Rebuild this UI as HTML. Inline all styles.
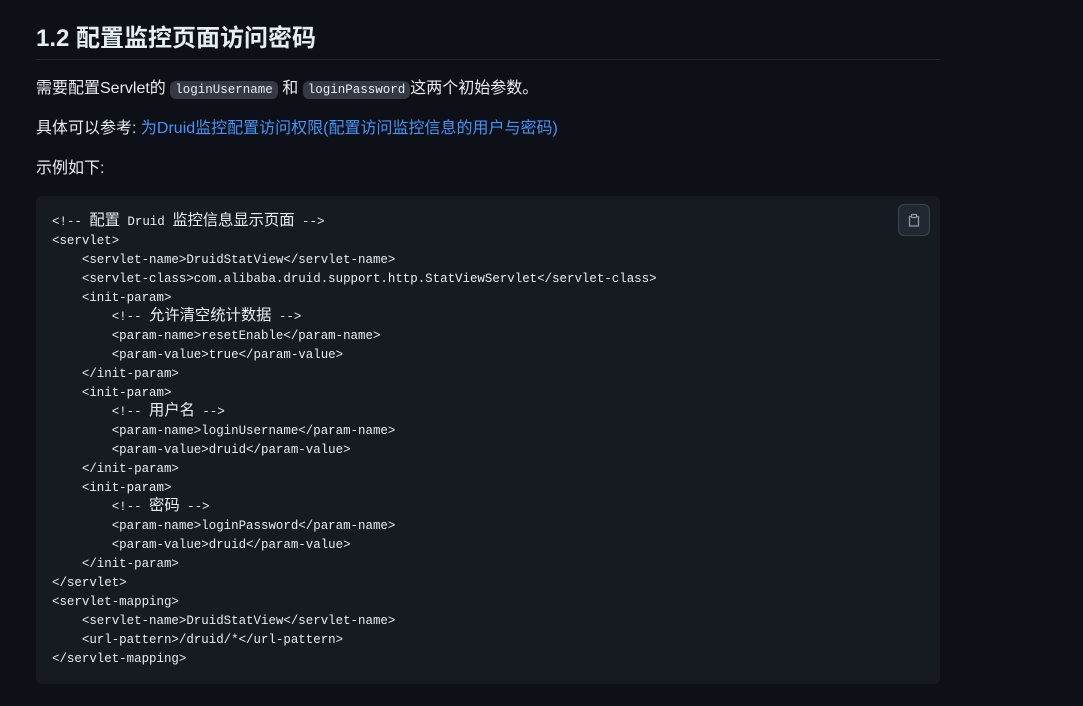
<!DOCTYPE html>
<html><head><meta charset="utf-8"><style>
body{margin:0;background:#0d1117;color:#e6edf3;font-family:"Liberation Sans","Noto Sans CJK SC",sans-serif;width:1083px;height:706px;overflow:hidden}
h2{position:absolute;left:36px;top:23px;width:904px;margin:0;font-size:24px;font-weight:bold;line-height:32px;padding-bottom:4px;border-bottom:1px solid #21262d}
p{position:absolute;left:36px;margin:0;font-size:16px;line-height:24px}
code{font-family:"Liberation Mono","Noto Sans CJK SC",monospace;font-size:12.5px;background:#343942;border-radius:6px;padding:2px 5px}
a{color:#4493f8;text-decoration:none}
pre{position:absolute;left:36px;top:196px;width:872px;height:454px;margin:0;padding:17px 16px 17px;background:#161b22;border-radius:6px;font-family:"Liberation Mono","Noto Sans CJK SC",monospace;font-size:12.45px;line-height:19px;color:#e6edf3}
.c{font-size:15.3px;line-height:0}
.btn{position:absolute;left:898px;top:204px;width:32px;height:32px;border:1px solid #3d444d;border-radius:6px;background:#212830;box-sizing:border-box}
</style></head><body>
<h2>1.2 配置监控页面访问密码</h2>
<p style="top:77px">需要配置Servlet的 <code>loginUsername</code> 和 <code>loginPassword</code>这两个初始参数。</p>
<p style="top:117px">具体可以参考: <a>为Druid监控配置访问权限(配置访问监控信息的用户与密码)</a></p>
<p style="top:157px">示例如下:</p>
<pre>&lt;!-- <span class="c">配置</span> Druid <span class="c">监控信息显示页面</span> --&gt;
&lt;servlet&gt;
    &lt;servlet-name&gt;DruidStatView&lt;/servlet-name&gt;
    &lt;servlet-class&gt;com.alibaba.druid.support.http.StatViewServlet&lt;/servlet-class&gt;
    &lt;init-param&gt;
        &lt;!-- <span class="c">允许清空统计数据</span> --&gt;
        &lt;param-name&gt;resetEnable&lt;/param-name&gt;
        &lt;param-value&gt;true&lt;/param-value&gt;
    &lt;/init-param&gt;
    &lt;init-param&gt;
        &lt;!-- <span class="c">用户名</span> --&gt;
        &lt;param-name&gt;loginUsername&lt;/param-name&gt;
        &lt;param-value&gt;druid&lt;/param-value&gt;
    &lt;/init-param&gt;
    &lt;init-param&gt;
        &lt;!-- <span class="c">密码</span> --&gt;
        &lt;param-name&gt;loginPassword&lt;/param-name&gt;
        &lt;param-value&gt;druid&lt;/param-value&gt;
    &lt;/init-param&gt;
&lt;/servlet&gt;
&lt;servlet-mapping&gt;
    &lt;servlet-name&gt;DruidStatView&lt;/servlet-name&gt;
    &lt;url-pattern&gt;/druid/*&lt;/url-pattern&gt;
&lt;/servlet-mapping&gt;</pre>
<div class="btn"><svg width="30" height="30" viewBox="0 0 30 30" fill="none" stroke="#9198a1" stroke-width="1.3"><path d="M12 11.5h-1.5v9.5h9v-9.5H18"/><rect x="12.5" y="9.5" width="5" height="3" rx=".5"/></svg></div>
</body></html>
